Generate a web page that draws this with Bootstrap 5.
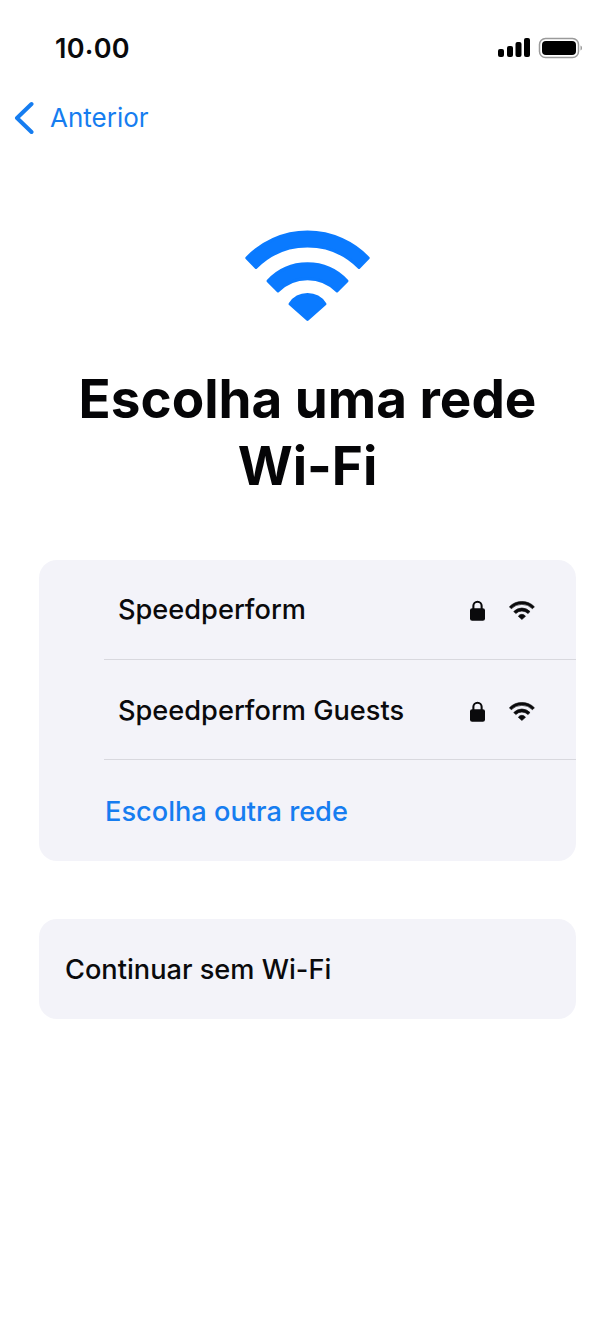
<!doctype html>
<html lang="pt"><head><meta charset="utf-8"><title>Wi-Fi</title>
<link href="https://cdn.jsdelivr.net/npm/bootstrap@5.3.0/dist/css/bootstrap.min.css" rel="stylesheet">
<style>
html,body{background:#fff;}
body{font-family:Inter,"Liberation Sans",sans-serif;color:#0a0a0c;width:615px;height:1332px;overflow:hidden;}
.status-row{padding:33px 33px 0 55px;height:101px;}
.clock{font-size:27px;font-weight:600;line-height:32px;letter-spacing:.3px;}
.clock-dot{vertical-align:4px;line-height:0;}
.back-row{padding:0 0 0 14px;height:34px;color:#167df0;gap:16px;}
.back-label{font-size:26px;line-height:34px;}
.hero-icon{margin-top:95px;}
.page-title{font-size:53px;font-weight:700;line-height:67px;margin:44px 0 0;text-align:center;color:#050507;}
.panel{background:#f3f3f9;border-radius:18px;margin:0 39px;overflow:hidden;}
.panel-first{margin-top:60px;}
.panel-second{margin-top:58px;height:100px;padding:2px 0 0 26px;}
.net-row{height:100px;padding:1px 41px 0 14px;margin-left:65px;border-bottom:1px solid #d8d8de;}
.net-row+.net-row{padding-top:3px;}
.net-row-last{height:101px;border-bottom:0;padding-left:1px;color:#167df0;}
.row-label{font-size:27.2px;font-weight:500;line-height:32px;}
.net-icons{gap:24px;}
.hero-glyph{color:#0a7aff;}
</style></head>
<body>
<svg width="0" height="0" class="position-absolute"><defs>
<symbol id="wifi" viewBox="0 0 126 92">
<g fill="currentColor" stroke="currentColor" stroke-width="3" stroke-linejoin="round">
<path d="M1.800 28A84 84 0 0 1 123.200 28L114 37.500A72.500 72.500 0 0 0 11 37.500Z"/>
<path d="M23 51A54 54 0 0 1 102 51L92 61A41.600 41.600 0 0 0 33 61Z"/>
<path d="M45 74A21 21 0 0 1 80 74L62.500 89.500Z"/>
</g></symbol>
<symbol id="lock" viewBox="0 0 16 22">
<path fill="currentColor" d="M2.500 8.500V6a5.500 5.500 0 0 1 11 0v2.500h.2A2.300 2.300 0 0 1 16 10.800v8.900A2.300 2.300 0 0 1 13.700 22H2.300A2.300 2.300 0 0 1 0 19.700v-8.900A2.300 2.300 0 0 1 2.300 8.500ZM4.700 8.500h6.600V6a3.300 3.300 0 0 0-6.600 0Z" fill-rule="evenodd"/>
</symbol>
</defs></svg>

<header class="status-row d-flex justify-content-between align-items-start">
  <span class="clock">10<span class="clock-dot">.</span>00</span>
  <svg class="mt-1" width="84" height="22" viewBox="0 0 84 22">
    <g fill="#000"><rect x="0" y="12" width="6" height="8" rx="2"/><rect x="9" y="9" width="6" height="11" rx="2"/><rect x="17.500" y="5" width="6" height="15" rx="2"/><rect x="26" y="1" width="6" height="19" rx="2"/></g>
    <rect x="41.500" y="1.500" width="39" height="19" rx="6" fill="none" stroke="#9a9a9a" stroke-width="1.500"/>
    <rect x="44" y="4" width="34" height="14" rx="4" fill="#000"/>
    <path d="M82.500 8.500c1.200.4 1.500 1.400 1.500 2.500s-.3 2.100-1.500 2.500Z" fill="#9a9a9a"/>
  </svg>
</header>

<nav class="back-row d-flex align-items-center">
  <svg width="20" height="34" viewBox="0 0 20 34"><path d="M17.500 3 3 17l14.500 14" fill="none" stroke="#167df0" stroke-width="4" stroke-linecap="round" stroke-linejoin="round"/></svg>
  <span class="back-label">Anterior</span>
</nav>

<main>
  <div class="hero-icon d-flex justify-content-center"><svg width="126" height="92" class="hero-glyph"><use href="#wifi"/></svg></div>
  <h1 class="page-title">Escolha uma rede<br>Wi-Fi</h1>

  <section class="panel panel-first">
    <div class="net-row d-flex align-items-center justify-content-between">
      <span class="row-label">Speedperform</span>
      <span class="net-icons d-flex align-items-center"><svg width="15" height="21"><use href="#lock"/></svg><svg width="26" height="19"><use href="#wifi"/></svg></span>
    </div>
    <div class="net-row d-flex align-items-center justify-content-between">
      <span class="row-label">Speedperform Guests</span>
      <span class="net-icons d-flex align-items-center"><svg width="15" height="21"><use href="#lock"/></svg><svg width="26" height="19"><use href="#wifi"/></svg></span>
    </div>
    <div class="net-row net-row-last d-flex align-items-center"><span class="row-label">Escolha outra rede</span></div>
  </section>

  <section class="panel panel-second d-flex align-items-center"><span class="row-label">Continuar sem Wi-Fi</span></section>
</main>
</body></html>
